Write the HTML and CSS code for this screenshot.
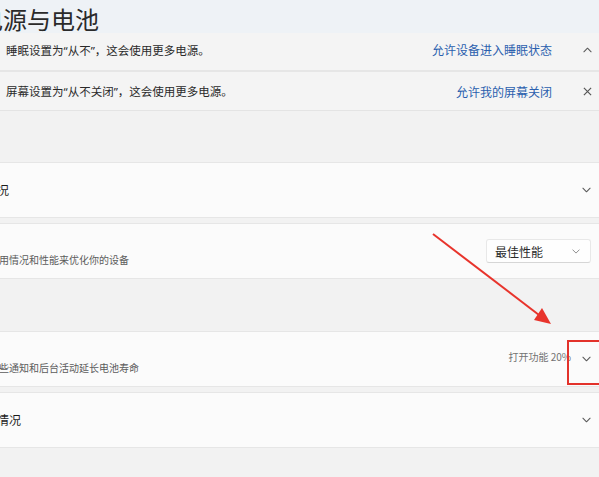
FILE: index.html
```html
<!DOCTYPE html>
<html lang="zh-CN">
<head>
<meta charset="utf-8">
<title>电源与电池</title>
<link rel="stylesheet" href="styles.css">
</head>
<body>
<div class="page">
  <header class="header">
    <h1 class="title">电源与电池</h1>
  </header>

  <div class="banners">
    <div class="banner banner-first">
      <span class="banner-text">睡眠设置为“从不”，这会使用更多电源。</span>
      <a class="banner-link">允许设备进入睡眠状态</a>
      <span class="icon-box">
        <svg class="chev" viewBox="0 0 10 6"><path d="M1 5 L5 1 L9 5"/></svg>
      </span>
    </div>
    <div class="banner">
      <span class="banner-text">屏幕设置为“从不关闭”，这会使用更多电源。</span>
      <a class="banner-link">允许我的屏幕关闭</a>
      <span class="icon-box">
        <svg class="close" viewBox="0 0 10 10"><path d="M1 1 L9 9 M9 1 L1 9"/></svg>
      </span>
    </div>
  </div>

  <section class="group group-first">
    <div class="card">
      <div class="card-main"><div class="card-title">充电器状况</div></div>
      <span class="icon-box">
        <svg class="chev" viewBox="0 0 10 6"><path d="M1 1 L5 5 L9 1"/></svg>
      </span>
    </div>
    <div class="card">
      <div class="card-main">
        <div class="card-title">电源模式</div>
        <div class="card-desc">根据电源使用情况和性能来优化你的设备</div>
      </div>
      <div class="select">
        <span class="select-text">最佳性能</span>
        <svg class="chev chev-small" viewBox="0 0 10 6"><path d="M1 1 L5 5 L9 1"/></svg>
      </div>
    </div>
  </section>

  <section class="group">
    <div class="card">
      <div class="card-main">
        <div class="card-title">节电模式</div>
        <div class="card-desc">通过限制某些通知和后台活动延长电池寿命</div>
      </div>
      <span class="card-value">打开功能 20%</span>
      <span class="icon-box">
        <svg class="chev" viewBox="0 0 10 6"><path d="M1 1 L5 5 L9 1"/></svg>
      </span>
    </div>
    <div class="card">
      <div class="card-main"><div class="card-title">电池使用情况</div></div>
      <span class="icon-box">
        <svg class="chev" viewBox="0 0 10 6"><path d="M1 1 L5 5 L9 1"/></svg>
      </span>
    </div>
  </section>
</div>

<svg class="annot-arrow" viewBox="0 0 599 477" width="599" height="477">
  <path class="arrow-line" d="M433 234 L539 315"/>
  <polygon class="arrow-head" points="551,324 534,320 542,308"/>
</svg>
<div class="annot-box"></div>
</body>
</html>
```

FILE: styles.css
```css
html, body {
  margin: 0;
  padding: 0;
}

body {
  width: 599px;
  height: 477px;
  overflow: hidden;
  background: #f2f2f2;
  font-family: "Noto Sans CJK SC", "Noto Sans", sans-serif;
  color: #1b1b1b;
  position: relative;
}

.page {
  margin: 0 -10px 0 -100px;
}

.header {
  height: 33px;
  background: #eef2f6;
  padding-left: 79px;
  box-sizing: border-box;
}

.title {
  margin: 0;
  padding-top: 5px;
  font-size: 24px;
  line-height: 28px;
  font-weight: 400;
  color: #2a2a2a;
  white-space: nowrap;
}

.banners {
  background: #f4f4f4;
  border-bottom: 1px solid #e4e4e4;
}

.banner {
  display: flex;
  align-items: center;
  height: 38px;
  padding: 0 10px 0 106px;
  font-size: 12px;
  color: #2a2a2a;
}

.banner-first {
  height: 39px;
  padding-bottom: 4px;
  box-sizing: border-box;
  border-bottom: 2px solid #e6e6e6;
}

.banner-text {
  flex: 1;
  white-space: nowrap;
  font-family: "Noto Sans", "Noto Sans CJK SC", sans-serif;
  font-size: 11.5px;
}

.banner-link {
  color: #2b5fae;
  margin-right: 23px;
  white-space: nowrap;
}

.icon-box {
  width: 24px;
  display: flex;
  align-items: center;
  justify-content: center;
  flex: none;
}

.chev {
  width: 9px;
  height: 6px;
  fill: none;
  stroke: #5a5a5a;
  stroke-width: 1.2;
  stroke-linecap: round;
  stroke-linejoin: round;
}

.chev-small {
  width: 8px;
  height: 5px;
  stroke: #8a8a8a;
}

.close {
  width: 9px;
  height: 9px;
  fill: none;
  stroke: #555;
  stroke-width: 1.3;
}

.group {
  margin-top: 52px;
  display: flex;
  flex-direction: column;
  gap: 5px;
}

.group-first {
  margin-top: 51px;
}

.card {
  display: flex;
  align-items: center;
  height: 54px;
  padding: 0 10px 0 48px;
  background: #fbfbfb;
  border: 1px solid #e6e6e6;
  border-radius: 4px;
}

.card-main {
  flex: 1;
  display: flex;
  flex-direction: column;
  white-space: nowrap;
}

.card-title {
  font-size: 12px;
  line-height: 16px;
  color: #1b1b1b;
}

.card-desc {
  font-size: 10px;
  line-height: 16px;
  margin-top: 1px;
  color: #5c5c5c;
}

.card-value {
  font-size: 10px;
  color: #737373;
  margin-right: 3px;
  margin-top: -5px;
  white-space: nowrap;
}

.select {
  display: flex;
  align-items: center;
  justify-content: space-between;
  width: 105px;
  height: 24px;
  box-sizing: border-box;
  padding: 0 10px 0 8px;
  margin-right: 7px;
  background: #fefefe;
  border: 1px solid #e8e8e8;
  border-bottom-color: #d6d6d6;
  border-radius: 3px;
  font-size: 12px;
  color: #2a2a2a;
}

.annot-arrow {
  position: absolute;
  left: 0;
  top: 0;
  pointer-events: none;
}

.arrow-line {
  stroke: #e8342c;
  stroke-width: 2;
  fill: none;
}

.arrow-head {
  fill: #e8342c;
}

.annot-box {
  position: absolute;
  left: 567px;
  top: 340px;
  width: 40px;
  height: 41px;
  border: 2px solid #e3322b;
}
```
